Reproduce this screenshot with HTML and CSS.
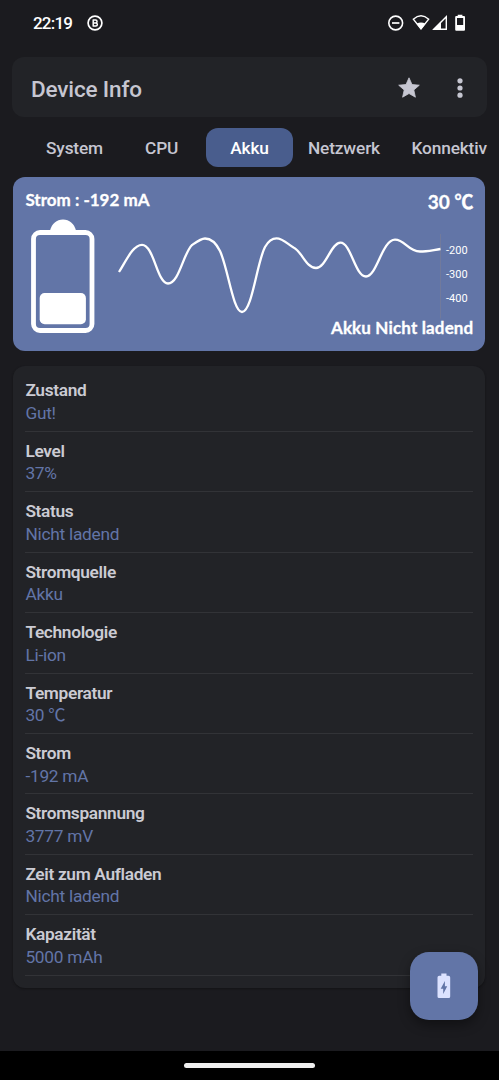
FILE: index.html
```html
<!DOCTYPE html>
<html lang="de">
<head>
<meta charset="utf-8">
<title>Device Info</title>
<link rel="stylesheet" href="styles.css">
</head>
<body>
<div class="screen">
  <header class="statusbar">
    <span class="clock">22:19</span>
    <svg class="badge-b" width="16" height="16" viewBox="0 0 16 16" fill="none" stroke="#fff"><circle cx="8" cy="8" r="6.9" stroke-width="1.7"/><path d="M5.9 5.1H8.6a1.4 1.4 0 0 1 0 2.9H6M8.6 8h.3a1.45 1.45 0 0 1 0 2.9H5.9M6.2 4.4V11.6" stroke-width="1.5"/></svg>
    <svg class="sysicons" width="80" height="18" viewBox="387 14 80 18" fill="none" stroke="#fff"><circle cx="395.7" cy="23" r="6.9" stroke-width="1.6"/><path d="M392 23h7.4" stroke-width="1.7"/><path d="M413.3 19.2Q421 12.500 428.700 19.200L421 28.800Z" stroke-width="1.4"/><path d="M416.500 23.800Q421 21 425.500 23.800L421 29.500Z" fill="#fff" stroke="none"/><path d="M446.300 16.700V29.300H433.800Z" stroke-width="1.400"/><path d="M441 21.500V29.500H432.800Z" fill="#fff" stroke="none"/><path d="M457.700 14.800h4.700v1.200h1.600a1 1 0 0 1 1 1v12.700a1 1 0 0 1-1 1h-7.800a1 1 0 0 1-1-1V17a1 1 0 0 1 1-1h1.500ZM457 18v7h6.200v-7Z" fill="#fff" fill-rule="evenodd" stroke="none"/></svg>
  </header>
  <div class="appbar">
    <h1 class="title">Device Info</h1>
    <svg class="star" width="22" height="21" viewBox="0 0 22 21"><path d="M11 .8 14 7.500 21.300 8.200 15.800 13 17.400 20.200 11 16.500 4.600 20.200 6.200 13 .7 8.200 8 7.500Z" fill="#c6c6d1" stroke="#c6c6d1" stroke-width=".8" stroke-linejoin="round"/></svg>
    <svg class="more" width="6" height="20" viewBox="0 0 6 20" fill="#c6c6d1"><circle cx="3" cy="2.800" r="2.600"/><circle cx="3" cy="10" r="2.600"/><circle cx="3" cy="17.200" r="2.600"/></svg>
  </div>
  <nav class="tabs">
    <span class="tab tab-system">System</span>
    <span class="tab tab-cpu">CPU</span>
    <span class="tab tab-active">Akku</span>
    <span class="tab tab-net">Netzwerk</span>
    <span class="tab tab-conn">Konnektiv</span>
  </nav>
  <section class="battery-card">
    <div class="readings">
      <span class="current">Strom : -192 mA</span>
      <span class="temperature">30 ℃</span>
    </div>
    <div class="battery-body">
      <svg class="battery" width="64" height="115" viewBox="31 219 64 115"><path d="M50 230.500C52 223.500 56.500 219.500 63 219.500S74 223.500 76 230.500Z" fill="#fff"/><rect x="33.500" y="232.500" width="58.500" height="98" rx="6.500" fill="none" stroke="#fff" stroke-width="4.800"/><rect x="39.700" y="293" width="46.200" height="31.300" rx="5" fill="#fff"/></svg>
      <svg class="chart" width="325" height="100" viewBox="116 230 325 100" fill="none"><path d="M440.500 234V318.500" stroke="#717a9c"/><path d="M119 272C126 261 133 244.800 142 244.800C154 244.800 157 283.500 168 283.500C179 283.500 183 254 192 245C197 241.500 201 238.500 205 238.500C211 238.500 216 243 220 251C228 268 233 312 242 312C252 312 257 262 265 247C269 240 273 238.400 276.500 238.400C283 238.400 288 244.500 293.500 247.500C302 251.500 306 268 316 268C326 268 331 242.700 340.500 242.700C351 242.700 355 276.500 366 276.500C377 276.500 382 239.700 395 239.700C405 239.700 408 251.500 420 251.500C427 251.500 433 250 440.500 249" stroke="#fff" stroke-width="2.300" stroke-linejoin="round"/></svg>
      <div class="scale"><span>-200</span><span>-300</span><span>-400</span></div>
      <span class="charge-state">Akku Nicht ladend</span>
    </div>
  </section>
  <dl class="details">
    <div class="row"><dt>Zustand</dt><dd>Gut!</dd></div>
    <div class="row"><dt>Level</dt><dd>37%</dd></div>
    <div class="row"><dt>Status</dt><dd>Nicht ladend</dd></div>
    <div class="row"><dt>Stromquelle</dt><dd>Akku</dd></div>
    <div class="row"><dt>Technologie</dt><dd>Li-ion</dd></div>
    <div class="row"><dt>Temperatur</dt><dd>30 ℃</dd></div>
    <div class="row"><dt>Strom</dt><dd>-192 mA</dd></div>
    <div class="row"><dt>Stromspannung</dt><dd>3777 mV</dd></div>
    <div class="row"><dt>Zeit zum Aufladen</dt><dd>Nicht ladend</dd></div>
    <div class="row"><dt>Kapazität</dt><dd>5000 mAh</dd></div>
  </dl>
  <div class="fab"><svg width="14" height="26" viewBox="0 0 14 26"><path d="M4.300.5h5.200v2.300h2a1.700 1.700 0 0 1 1.700 1.700v19a1.500 1.500 0 0 1-1.500 1.500H2a1.500 1.500 0 0 1-1.500-1.500v-19A1.700 1.700 0 0 1 2.200 2.800h2.100ZM7.900 8 3.700 15.800H6.200V21L10.200 13.200H7.900Z" fill="#dce2ff" fill-rule="evenodd"/></svg></div>
  <footer class="navbar"><div class="handle"></div></footer>
</div>
</body>
</html>
```
FILE: styles.css
```css
* { box-sizing: border-box; }
body { margin: 0; background: #1b1b1f; font-family: Roboto, "Noto Sans CJK SC", sans-serif; }
.screen { position: relative; width: 499px; height: 1080px; overflow: hidden; display: flex; flex-direction: column; background: #1b1b1f; color: #c6c6d1; }
.statusbar { height: 57px; flex: none; display: flex; align-items: flex-start; padding: 14px 32px 0 33px; color: #fff; }
.clock { width: 54px; font: 500 17px/18px Roboto, sans-serif; white-space: nowrap; letter-spacing: -.8px; }
.badge-b { margin-top: 1px; }
.sysicons { margin-left: auto; }
.appbar { flex: none; height: 60px; margin: 0 12px; padding: 1px 24px 0 19px; border-radius: 12px; background: #222327; display: flex; align-items: center; }
.title { flex: 1; margin: 2px 0 0; font-weight: 500; font-size: 22.500px; line-height: 28px; letter-spacing: -.15px; }
.star { margin-right: 37px; }
.tabs { flex: none; display: flex; height: 39px; margin: 11px 11px 0 12px; overflow: hidden; font-weight: 500; font-size: 17.300px; line-height: 41px; white-space: nowrap; letter-spacing: -.15px; }
.tab { flex: none; }
.tab-system { width: 99px; margin-left: 34px; }
.tab-cpu { width: 61px; }
.tab-active { width: 87px; border-radius: 12px; background: #495d8d; color: #fff; text-align: center; }
.tab-net { width: 103.500px; margin-left: 15px; }
.battery-card { flex: none; height: 173.500px; margin: 10.400px 13.600px 0 13.400px; padding: 0 12px; border-radius: 12px; background: #6275a7; color: #fff; }
.readings { display: flex; justify-content: space-between; height: 41.600px; padding-top: 10.600px; font-family: Lato, "Noto Sans CJK SC", sans-serif; font-weight: 700; white-space: nowrap; -webkit-text-stroke: .3px #fff; }
.current { font-size: 17px; line-height: 24px; }
.temperature { font-size: 19px; line-height: 27px; }
.battery-body { display: grid; grid-template-columns: 64px 325px 1fr; grid-template-rows: 98px 24px; padding-left: 5.600px; }
.battery { grid-row: 1 / 3; }
.chart { margin: 11px 0 0 21px; }
.scale { display: flex; flex-direction: column; padding: 20px 0 0 26px; font-size: 11px; line-height: 23.800px; white-space: nowrap; }
.charge-state { grid-column: 2 / 4; justify-self: end; font-family: Lato, sans-serif; font-weight: 700; font-size: 17px; line-height: 22px; letter-spacing: .15px; -webkit-text-stroke: .3px #fff; z-index: 1; }
.details { flex: none; height: 621.500px; margin: 15.500px 13.600px 0 13.400px; padding: 5px 12px; border-radius: 12px; background: #222327; box-shadow: 0 1px 2px #131316; }
.row { height: 60.440px; padding-top: 8px; border-bottom: 1px solid #323337; font-size: 17.300px; line-height: 22.500px; }
.row dt { font-weight: 600; color: #cbcbd3; letter-spacing: -.33px; }
.row dd { margin: 0; color: #6275a7; letter-spacing: -.25px; }
.fab { position: absolute; left: 410px; top: 952px; width: 68px; height: 68px; border-radius: 19px; background: #6275a7; display: flex; align-items: center; justify-content: center; box-shadow: 0 5px 12px rgba(0, 0, 0, .38); }
.navbar { margin-top: auto; flex: none; height: 29px; background: #000; display: flex; justify-content: center; padding-top: 12px; }
.handle { width: 131px; height: 5px; border-radius: 3px; background: #efefef; }
```
